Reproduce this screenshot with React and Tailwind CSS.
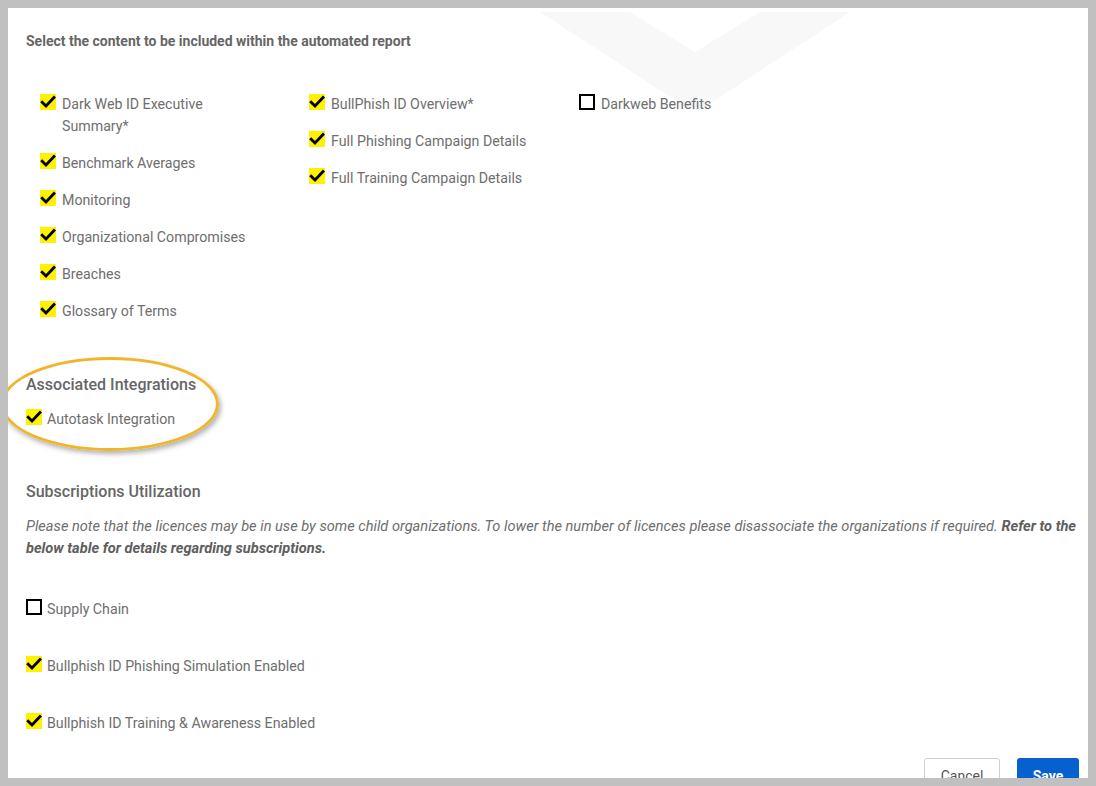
import React from 'react';

const font = { fontFamily: 'Roboto, "Liberation Sans", sans-serif' };

function Box({ checked }) {
  if (!checked) {
    return <span className="block w-4 h-4 shrink-0 border-2 border-black bg-white" />;
  }
  return (
    <span className="block w-4 h-4 shrink-0 bg-[#fff200] relative">
      <svg viewBox="0 0 16 16" className="absolute inset-0 w-4 h-4">
        <path d="M2.2 8.2 L6 12 L14 3.6" fill="none" stroke="#000" strokeWidth="2.8" strokeLinecap="square" />
      </svg>
    </span>
  );
}

function Item({ label, checked = true, gap = 'gap-[6px]', width = 'w-[200px]' }) {
  return (
    <label className={`flex items-start ${gap} text-[14.2px] leading-[22px] text-[#6e6e6e]`}>
      <span className="mt-[1px]"><Box checked={checked} /></span>
      <span className={width}>{label}</span>
    </label>
  );
}

const col1 = ['Dark Web ID Executive Summary*', 'Benchmark Averages', 'Monitoring', 'Organizational Compromises', 'Breaches', 'Glossary of Terms'];
const col2 = ['BullPhish ID Overview*', 'Full Phishing Campaign Details', 'Full Training Campaign Details'];

export default function App() {
  return (
    <div className="h-[786px] w-[1096px] bg-[#c0c0c0] p-2 overflow-hidden" style={font}>
      <div className="relative h-[770px] bg-white overflow-hidden px-[18px] pt-6">
        {/* faint watermark chevron */}
        <svg className="absolute left-[532px] top-[4px] pointer-events-none" width="320" height="110" viewBox="0 0 320 110">
          <path d="M0 0 L90 0 L155 40 L220 0 L310 0 L163 96 Q155 101 147 96 Z" fill="#f8f8f8" />
        </svg>

        <div className="relative">
          <h1 className="text-[14px] leading-[18px] font-bold text-[#666]">
            Select the content to be included within the automated report
          </h1>

          <div className="flex mt-[43px] pl-[14px]">
            <div className="w-[269px] flex flex-col gap-[15px]">
              {col1.map((l) => <Item key={l} label={l} />)}
            </div>
            <div className="w-[270px] flex flex-col gap-[15px]">
              {col2.map((l) => <Item key={l} label={l} width="w-[230px]" />)}
            </div>
            <div className="flex flex-col gap-[15px]">
              <Item label="Darkweb Benefits" checked={false} />
            </div>
          </div>

          <div className="relative mt-[52px]">
            {/* annotation ellipse */}
            <div className="absolute left-[-25px] top-[-17px] w-[218px] h-[94px] rounded-[50%] border-[3px] border-[#f0b52b] shadow-[2px_3px_5px_rgba(0,0,0,0.3)] pointer-events-none" />
            <h2 className="text-[16px] leading-[22px] font-medium text-[#666]">Associated Integrations</h2>
            <div className="mt-3">
              <Item label="Autotask Integration" gap="gap-[5px]" width="w-[300px]" />
            </div>
          </div>

          <h2 className="mt-[51px] text-[16px] leading-[22px] font-medium text-[#666]">Subscriptions Utilization</h2>
          <p className="mt-3 mr-[-14px] text-[14.6px] leading-[22px] italic text-[#6e6e6e]">
            Please note that the licences may be in use by some child organizations. To lower the number of licences please disassociate the organizations if required.{' '}
            <b className="font-bold text-[#5e5e5e]">Refer to the below table for details regarding subscriptions.</b>
          </p>

          <div className="mt-[39px] flex flex-col gap-[35px]">
            <Item label="Supply Chain" checked={false} gap="gap-[5px]" width="w-[400px]" />
            <Item label="Bullphish ID Phishing Simulation Enabled" gap="gap-[5px]" width="w-[400px]" />
            <Item label="Bullphish ID Training & Awareness Enabled" gap="gap-[5px]" width="w-[400px]" />
          </div>

          <div className="mt-[24px] flex justify-end gap-[17px] mr-[-9px]">
            <button className="w-[76px] h-[36px] rounded-[3px] border border-[#cfcfcf] bg-white text-[14px] text-[#555]">Cancel</button>
            <button className="w-[62px] h-[36px] rounded-[3px] bg-[#0760cf] text-[14px] font-bold text-white">Save</button>
          </div>
        </div>
      </div>
    </div>
  );
}
